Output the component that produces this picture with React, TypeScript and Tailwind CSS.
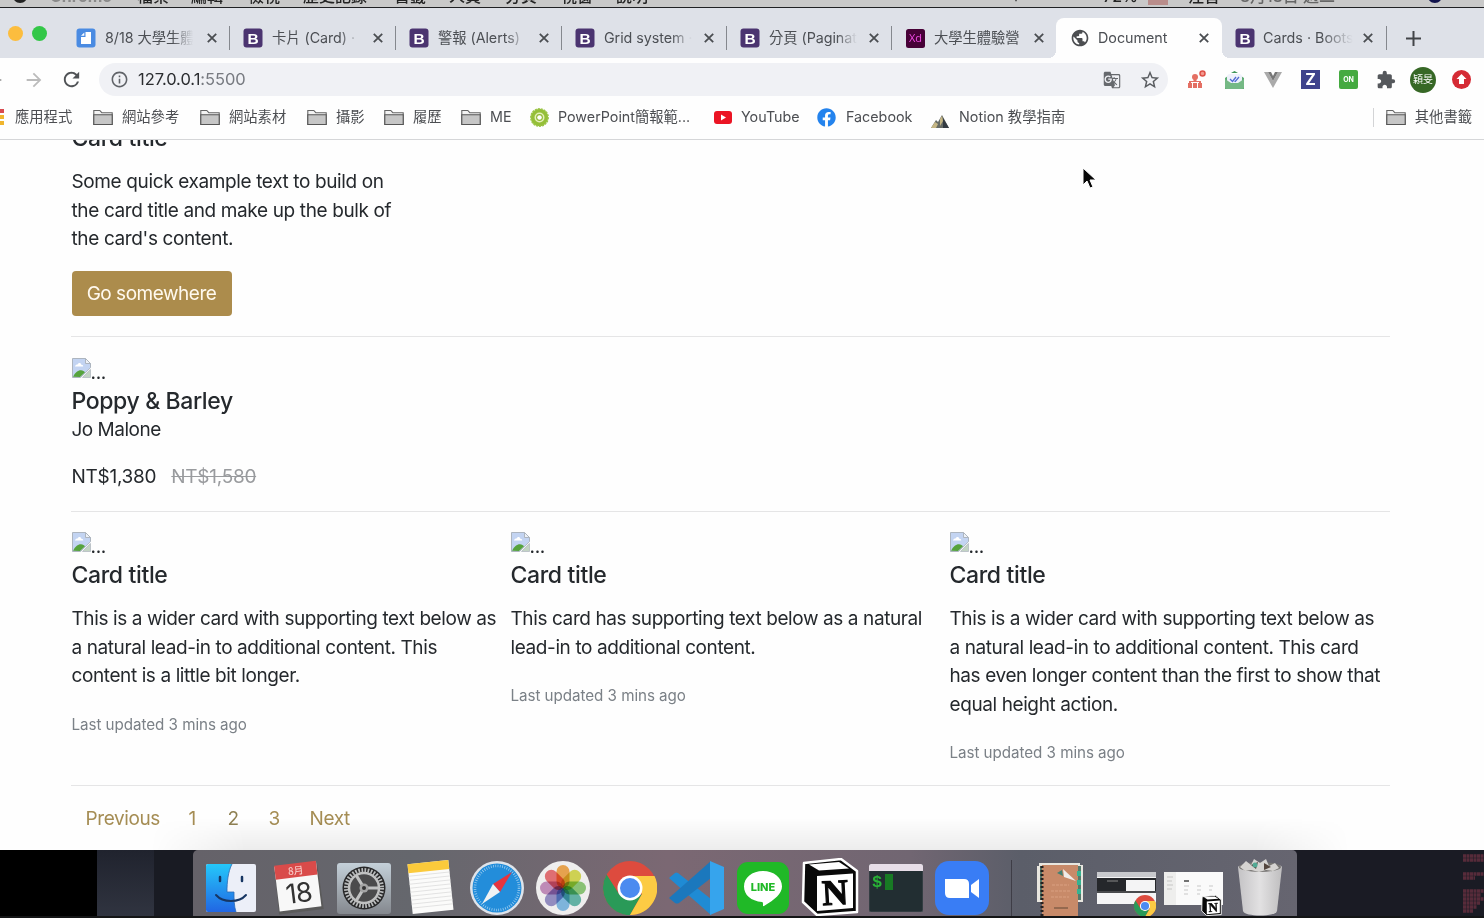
import React from "react";
import { FaFacebook } from "react-icons/fa";
import { MdExtension, MdStarBorder, MdGTranslate, MdRefresh, MdPublic, MdArrowForward, MdArrowBack, MdInfoOutline } from "react-icons/md";

function BootstrapIcon() {
  return (
    <svg width="20" height="20" viewBox="0 0 20 20" className="shrink-0">
      <rect x="0.5" y="0.5" width="19" height="19" rx="3" fill="#4b3470" />
      <text x="10" y="15.6" textAnchor="middle" fontSize="15.5" fontWeight="700" fill="#fff" fontFamily="Liberation Sans, sans-serif">B</text>
    </svg>
  );
}

function DocIcon() {
  return (
    <svg width="20" height="20" viewBox="0 0 20 20" className="shrink-0">
      <rect x="0.5" y="0.5" width="19" height="19" rx="3" fill="#4a8be2" />
      <path d="M9.5 4h5.5v12H5V9h4.5z" fill="#fff" />
      <path d="M8.3 4.6v3.2H5z" fill="#fff" />
    </svg>
  );
}

function XdIcon() {
  return (
    <svg width="19" height="19" viewBox="0 0 19 19" className="shrink-0">
      <rect width="19" height="19" rx="2.5" fill="#470137" />
      <text x="9.5" y="13" textAnchor="middle" fontSize="11" fontWeight="500" fill="#ef4be4" fontFamily="Open Sans, sans-serif">Xd</text>
    </svg>
  );
}

function CloseIcon() {
  return (
    <svg width="10" height="10" viewBox="0 0 10 10" className="shrink-0">
      <path d="M.8.8l8.4 8.4M9.2.8L.8 9.2" stroke="#4a4d51" strokeWidth="1.8" />
    </svg>
  );
}

type TabProps = { icon: React.ReactNode; label: string; width: string; fade?: boolean };

function Tab({ icon, label, width, fade }: TabProps) {
  return (
    <div className={`${width} flex h-9 shrink-0 items-center pl-[13px]`}>
      <div className="flex w-5 shrink-0 justify-center">{icon}</div>
      <div className={`ml-[9px] w-[90px] shrink-0 overflow-hidden whitespace-nowrap text-[14.3px] tracking-[-0.05px] text-[#4c4f54] ${fade ? "[mask-image:linear-gradient(to_right,black_75%,transparent_98%)]" : ""}`}>{label}</div>
      <div className="ml-auto mr-[12.5px]"><CloseIcon /></div>
    </div>
  );
}

function Divider() {
  return <div className="h-6 w-px shrink-0 bg-[#85888e]" />;
}

function Folder() {
  return (
    <svg width="20" height="17" viewBox="0 0 20 17" className="shrink-0">
      <path d="M.8 15.5V1.5h6l2 2.2h10.4v11.8z" fill="#f3f3f3" stroke="#666" strokeWidth="1.1" />
      <path d="M.8 5.8h18.4v9.7H.8z" fill="#c6c6c6" stroke="#555" strokeWidth="1.1" />
    </svg>
  );
}

function BrokenImage() {
  return (
    <div className="flex h-[29px] items-end">
      <svg width="19" height="20" viewBox="0 0 19 20" className="mb-[8px] shrink-0">
        <path d="M.5.5h13l5 5v4.2L8.6 19.5H.5z" fill="#c3d4f2" stroke="#adb5bf" />
        <path d="M3 8.5c0-1.8 2.6-1.7 2.9-2.5.7-1.7 3.4-1 3.3.8 1.4-.3 2 .6 2 1.7z" fill="#fff" />
        <path d="M1 18.8c2-4.2 5-6.7 8-6.6 2 0 3 1 4 2l-5 4.9z" fill="#56a33c" />
        <path d="M13.5.5v5h5z" fill="#eef2f8" stroke="#adb5bf" />
        <path d="M18.5 11.5v8h-8z" fill="#c3d4c4" stroke="#adb5bf" strokeWidth=".7" />
      </svg>
      <span className="h-[28px] text-[19px] leading-[29px] tracking-[-0.3px]">...</span>
    </div>
  );
}

function Card({ title, lines }: { title: string; lines: string[] }) {
  return (
    <div className="w-[439px] shrink-0">
      <BrokenImage />
      <h5 className="mt-px h-7 text-[23px] font-medium leading-7 tracking-[-0.35px]">{title}</h5>
      <div className="mt-[16px] whitespace-nowrap leading-[28.5px]">
        {lines.map((l) => <p key={l}>{l}</p>)}
      </div>
      <p className="mt-5 text-[15.2px] leading-[28.5px] tracking-[-0.05px] text-[#7b8187]">Last updated 3 mins ago</p>
    </div>
  );
}

function ChromeLogo({ className }: { className: string }) {
  return (
    <svg viewBox="0 0 54 54" className={className}>
      <circle cx="27" cy="27" r="27" fill="#dd4b3e" />
      <path d="M3.6 13.5A27 27 0 0 0 27 54L39 33 27 39 16 33z" fill="#2a9a58" />
      <path d="M27 54A27 27 0 0 0 51.5 15H27L39 33z" fill="#fccb44" />
      <circle cx="27" cy="27" r="12.5" fill="#fff" />
      <circle cx="27" cy="27" r="10" fill="#4b8bf0" />
    </svg>
  );
}

function NotionCube({ className }: { className: string }) {
  return (
    <svg viewBox="0 0 58 58" className={className}>
      <path d="M3 5L40 1 56 13V54L16 57 2 44z" fill="#090909" stroke="#fff" strokeWidth="2.5" strokeLinejoin="round" />
      <path d="M8 6.500L38 4 48 10.500 18 12.500z" fill="#fff" />
      <path d="M16 18L52 15.500V50L16 53z" fill="#fff" />
      <text x="34" y="46.500" textAnchor="middle" fontSize="36" fontWeight="700" fontFamily="Liberation Serif, serif" fill="#080808" stroke="#080808" strokeWidth="1.200" transform="rotate(-3 34 34)">N</text>
    </svg>
  );
}

function Finder() {
  return (
    <svg width="50" height="48" viewBox="0 0 50 48">
      <defs><linearGradient id="fb" x1="0" y1="0" x2="0" y2="1"><stop stopColor="#25c8fa" /><stop offset="1" stopColor="#2166e3" /></linearGradient></defs>
      <rect width="50" height="48" rx="2" fill="#eceff8" />
      <path d="M2 0h24c-4 8-5 18-5 28h7c0 7 0 14 2 20H2a2 2 0 0 1-2-2V2a2 2 0 0 1 2-2z" fill="url(#fb)" />
      <path d="M26 0c-4 8-5 18-5 28h7c0 7 0 14 2 20" fill="none" stroke="#2b6bb5" strokeWidth=".8" />
      <path d="M14 13v4M36 13v4" stroke="#173663" strokeWidth="2.500" strokeLinecap="round" />
      <path d="M10 31c7 8 23 8 30 0" fill="none" stroke="#173663" strokeWidth="2" strokeLinecap="round" />
    </svg>
  );
}

function Calendar() {
  return (
    <svg width="54" height="56" viewBox="0 0 54 56">
      <g transform="rotate(-7 27 28)">
        <path d="M6 7h43l1 45H5z" fill="#5a5a5a" /><rect x="6" y="4" width="42" height="45" fill="#f8f8f8" />
        <rect x="6" y="3" width="42" height="14" fill="#d94b4a" />
        <text x="27" y="14" fontSize="10" textAnchor="middle" fill="#fbd8d4" fontFamily="Noto Sans CJK TC, sans-serif">8月</text>
        <text x="27" y="42.500" fontSize="27" textAnchor="middle" fill="#333" fontFamily="Inter, sans-serif" letterSpacing="-1">18</text>
      </g>
    </svg>
  );
}

function Settings() {
  return (
    <svg width="54" height="51" viewBox="0 0 54 51">
      <defs><linearGradient id="sg" x1="0" y1="0" x2="0" y2="1"><stop stopColor="#c4d0d9" /><stop offset="1" stopColor="#84888e" /></linearGradient></defs>
      <rect width="54" height="51" rx="3" fill="url(#sg)" />
      <circle cx="27" cy="25" r="21.5" fill="#282829" />
      <circle cx="27" cy="25" r="18" fill="none" stroke="#b9bbbc" strokeWidth="4" strokeDasharray="1.700 1.440" />
      <circle cx="27" cy="25" r="15" fill="#4b4b4c" stroke="#c0c1c1" strokeWidth="2.500" />
      <path d="M27 25h15M27 25l-8-13M27 25l-8 13" stroke="#c0c1c1" strokeWidth="3.200" />
      <circle cx="27" cy="25" r="4.5" fill="#a4a4a4" /><circle cx="27" cy="25" r="2" fill="#333" />
    </svg>
  );
}

function Notes() {
  return (
    <svg width="50" height="56" viewBox="0 0 50 56">
      <g transform="rotate(-6 25 28)">
        <rect x="4" y="3" width="41" height="50" fill="#fbfbfa" /><rect x="4" y="3" width="41" height="9" fill="#fbca3b" />
        {[15, 19, 23, 27, 31, 35, 39, 43, 47].map((y) => <path key={y} d={`M4 ${y}h41`} stroke="#dededd" strokeWidth=".8" />)}
      </g>
    </svg>
  );
}

function Safari() {
  return (
    <svg width="54" height="54" viewBox="0 0 54 54">
      <circle cx="27" cy="27" r="27" fill="#dfe4ea" /><circle cx="27" cy="27" r="24.500" fill="#238dda" />
      <circle cx="27" cy="27" r="22" fill="none" stroke="#a7d2f1" strokeWidth="2.600" strokeDasharray=".7 1.604" />
      <path d="M42 11L30 31 23 23z" fill="#e7343e" /><path d="M12 43L23 23 30 31z" fill="#eff2f4" />
    </svg>
  );
}

const petals = ["#f5a33b", "#d7dc42", "#83c86b", "#54b5a5", "#75b8e8", "#8e87c6", "#c486bc", "#ec6368"];
function Photos() {
  return (
    <svg width="54" height="54" viewBox="0 0 54 54">
      <circle cx="27" cy="27" r="27" fill="#efeeee" />
      {petals.map((c, i) => <rect key={c} x="20.500" y="4" width="13" height="23" rx="6.500" fill={c} fillOpacity=".88" className="mix-blend-multiply" transform={`rotate(${i * 45} 27 27)`} />)}
    </svg>
  );
}

function VSCode() {
  return (
    <svg width="55" height="54" viewBox="0 0 55 54">
      <path d="M0 17l6-5q1-1 3 0l33 26v16z" fill="#1f8bd4" />
      <path d="M0 37l6 5q2 1 4 0l32-25V0z" fill="#1b78bd" />
      <path d="M41 0l14 6v42l-14 6z" fill="#36a4ed" />
    </svg>
  );
}

function Line() {
  return (
    <svg width="52" height="52" viewBox="0 0 52 52">
      <rect width="52" height="52" rx="11" fill="#20b927" />
      <path d="M26 9c11 0 19 6.5 19 15.5 0 7-7 13-18 19.5-2 1 0-4-2-4C14 39 7 33 7 24.500 7 15.500 15 9 26 9z" fill="#fff" />
      <text x="26" y="28.500" fontSize="11" fontWeight="800" textAnchor="middle" fill="#20b927" fontFamily="Inter, sans-serif">LINE</text>
    </svg>
  );
}

function Terminal() {
  return (
    <svg width="54" height="48" viewBox="0 0 54 48">
      <rect width="54" height="48" rx="2" fill="#222e32" stroke="#4f575c" strokeWidth=".8" /><path d="M0 7V2q0-2 2-2h50q2 0 2 2v5z" fill="#e8dee8" />
      <text x="3" y="23" fontSize="17" fontWeight="700" fill="#29b437" fontFamily="Liberation Mono, monospace">$</text><rect x="16" y="10" width="8" height="16" fill="#187a24" />
    </svg>
  );
}

function Zoom() {
  return (
    <svg width="54" height="54" viewBox="0 0 54 54">
      <rect width="54" height="54" rx="14" fill="#397df5" /><path d="M10 18h19q5 0 5 5v14H15q-5 0-5-5z" fill="#fff" />
      <path d="M36 24l8-6v19l-8-6z" fill="#fff" />
    </svg>
  );
}

function Notebook() {
  return (
    <svg width="48" height="54" viewBox="0 0 48 54">
      <path d="M3 0h41v2h3v37H1V3h2z" fill="#e8e6df" /><path d="M4 3h41v34H4z" fill="#55796c" />
      <rect x="6" y="2" width="36" height="52" fill="#c88a69" />
      <path d="M6 3v51" stroke="#25201f" strokeWidth="3" strokeDasharray="2 2" />
      <path d="M27 6l13 12-12-4z" fill="#f0ece9" /><path d="M21 10l5-3 1 6z" fill="#438073" />
      <path d="M16 22h17M15 28h19M15 34h18" stroke="#d39979" strokeWidth="1.500" strokeDasharray="3 1" /><path d="M18 45h14" stroke="#624837" />
      <path d="M43 8v5M43 17v5M43 26v5" stroke="#35b391" strokeWidth="4" />
    </svg>
  );
}

function ChromeWindow() {
  return (
    <svg width="59" height="32" viewBox="0 0 59 32">
      <rect width="59" height="32" fill="#f5f5f6" /><rect width="59" height="5" fill="#c8c9cd" /><rect y="6" width="59" height="13" fill="#25272b" />
      <rect x="29" y="8" width="29" height="11" fill="#f4f4f5" /><path d="M10 9h11" stroke="#888" /><path d="M0 20h59" stroke="#494a4d" strokeWidth="2" />
    </svg>
  );
}

function NotionWindow() {
  return (
    <svg width="59" height="33" viewBox="0 0 59 33">
      <rect width="59" height="33" fill="#fafafa" /><rect width="12" height="33" fill="#eeeeed" />
      <path d="M3 5h6M3 9h5M3 13h6M3 17h5M20 14h5M33 14h4M45 14h4M20 18h4M33 18h4M45 18h3M20 22h4M33 22h3" stroke="#bbb" strokeWidth=".8" /><path d="M20 9h5" stroke="#444" strokeWidth="1.500" />
    </svg>
  );
}

function Trash() {
  return (
    <svg width="46" height="58" viewBox="0 0 46 58">
      <defs><linearGradient id="tb"><stop stopColor="#c4c3c5" /><stop offset=".5" stopColor="#e2e1e2" /><stop offset="1" stopColor="#bfbebf" /></linearGradient></defs>
      <path d="M1 9c0-4 44-4 44 0l-5 44c-1 6-33 6-34 0z" fill="url(#tb)" />
      <ellipse cx="23" cy="9" rx="21" ry="5" fill="#777573" />
      <path d="M3 9l6-6 5 4 3-6 6 4 6-4 3 7 6-3 4 5-6 3-7-1-7 2-8-2-6 1z" fill="#d5d3d1" />
      <path d="M14 7l7-3-2 7zM27 5l7 4-7 3z" fill="#54463e" /><circle cx="18" cy="7" r="2.500" fill="#52a994" />
    </svg>
  );
}

function DockItem({ left, top, children }: { left: string; top: string; children: React.ReactNode }) {
  return <div className={`${left} ${top} shrink-0`}>{children}</div>;
}

export default function App() {
  return (
    <div className="flex h-[918px] w-[1484px] flex-col overflow-hidden bg-[#fefefe] font-['Inter','Noto_Sans_CJK_TC',sans-serif] text-[#25292d]">
      <div className="h-2 shrink-0 overflow-hidden border-b border-[#202124] bg-[#c9c9c9]">
        <div className="-mt-[14px] flex h-5 items-center whitespace-nowrap text-[16px] font-medium leading-5 text-[#232323]">
          <span className="ml-[11px] w-[39px] text-[20px]">●</span><span className="w-[87px] font-bold text-[#8a8a8a]">Chrome</span>
          <span className="w-[54px]">檔案</span><span className="w-[57px]">編輯</span><span className="w-[55px]">檢視</span><span className="w-[91px]">歷史記錄</span><span className="w-[55px]">書籤</span><span className="w-[56px]">人員</span><span className="w-[56px]">分頁</span><span className="w-[55px]">視窗</span><span>說明</span>
          <span className="ml-[364px]">▾</span><span className="ml-[83px] w-[45px]">72%</span><span className="h-[17px] w-[20px] bg-[#b98d8b]" /><span className="ml-5">注音</span><span className="ml-5 text-[#666]">8月18日 週二</span><span className="ml-auto mr-10 text-[20px] text-[#11134d]">●</span>
        </div>
      </div>
      <div className="flex h-[50px] shrink-0 items-end bg-[#dee1e8]">
        <div className="flex h-full w-[63px] shrink-0 items-center gap-[9px] pl-[8px]">
          <div className="h-[15px] w-[15px] rounded-full bg-[#fcbd3e]" /><div className="h-[15px] w-[15px] rounded-full bg-[#33c748]" />
        </div>
        <div className="flex h-10 items-center">
          <Tab icon={<DocIcon />} label="8/18 大學生體驗營" width="w-[166px]" fade />
          <Divider /><Tab icon={<BootstrapIcon />} label="卡片 (Card) · Bootstrap" width="w-[165px]" fade />
          <Divider /><Tab icon={<BootstrapIcon />} label="警報 (Alerts)" width="w-[165px]" fade />
          <Divider /><Tab icon={<BootstrapIcon />} label="Grid system · Boot" width="w-[164px]" fade />
          <Divider /><Tab icon={<BootstrapIcon />} label="分頁 (Pagination)" width="w-[164px]" fade />
          <Divider /><Tab icon={<XdIcon />} label="大學生體驗營" width="w-[164px]" />
        </div>
        <div className="relative flex h-10 w-[166px] shrink-0 items-center rounded-t-[8px] bg-[#fefefe] pl-[14px] before:absolute before:-left-2 before:bottom-0 before:h-2 before:w-2 before:bg-[radial-gradient(circle_at_0_0,transparent_8px,#fefefe_8px)] after:absolute after:-right-2 after:bottom-0 after:h-2 after:w-2 after:bg-[radial-gradient(circle_at_100%_0,transparent_8px,#fefefe_8px)]">
          <MdPublic size={20} color="#4b4d50" /><span className="ml-[8px] text-[14.3px] text-[#4c4f54]">Document</span><div className="ml-auto mr-[13px]"><CloseIcon /></div>
        </div>
        <div className="flex h-10 items-center">
          <div className="flex w-[164px] items-center pl-[13px]"><BootstrapIcon /><span className="ml-2 w-[90px] overflow-hidden whitespace-nowrap text-[14.3px] text-[#4c4f54] [mask-image:linear-gradient(to_right,black_65%,transparent)]">Cards · Bootstrap</span><div className="ml-auto mr-[13px]"><CloseIcon /></div></div>
          <Divider />
          <svg width="15" height="15" viewBox="0 0 15 15" className="ml-[19px]"><path d="M7.500 0v15M0 7.500h15" stroke="#424548" strokeWidth="2" /></svg>
        </div>
      </div>
      <div className="flex h-[43px] shrink-0 items-center">
        <MdArrowBack size={22} className="-ml-[17px] shrink-0 text-[#aaa]" /><MdArrowForward size={22} className="ml-[18px] shrink-0 text-[#bbb]" /><MdRefresh size={23} className="ml-[15px] shrink-0 text-[#505356]" />
        <div className="ml-4 flex h-[33px] w-[1069px] shrink-0 items-center rounded-full bg-[#f0f1f5] pl-[11px]">
          <MdInfoOutline size={19} color="#606368" /><span className="ml-[9px] text-[16.5px] tracking-[-0.05px] text-[#2b2d30]">127.0.0.1<span className="text-[#777a80]">:5500</span></span>
          <MdGTranslate size={18} color="#66696d" className="ml-auto" /><MdStarBorder size={22} color="#595c60" className="ml-[18px] mr-[7px]" />
        </div>
        <div className="ml-[19px] flex items-center">
          <svg width="19" height="20" viewBox="0 0 19 20"><g fill="#e46f63"><circle cx="8" cy="7" r="3" /><rect x="1" y="13" width="4" height="5" /><rect x="6" y="13" width="4" height="5" /><rect x="11" y="13" width="4" height="5" /><path d="M6.500 9h3v2H14v3h-2v-2H4v2H2v-3h4.500z" /></g><circle cx="15.500" cy="3.500" r="2.500" fill="#f3998f" stroke="#dd5148" strokeWidth="1.500" /></svg>
          <svg width="19" height="18" viewBox="0 0 19 18" className="ml-[19px]"><path d="M6 2l3.500-2L13 2z" fill="#3f9558" /><path d="M0 7l3-2v13H0zM19 7l-3-2v13h3z" fill="#5dab72" /><rect x="2" y="3" width="15" height="11" rx="3" fill="#eef1fb" /><path d="M0 8l6 4h7l6-4v8q0 2-2 2H2q-2 0-2-2z" fill="#75b985" /><path d="M5 8l2.500 2.500L11 6M9.500 10l.8.5L14 6" fill="none" stroke="#526bd2" strokeWidth="1.300" /></svg>
          <svg width="18" height="16" viewBox="0 0 18 16" className="ml-[20px]"><path d="M0 0h4l5 9 5-9h4L9 16z" fill="#aaa" /><path d="M4 0h3l2 4 2-4h3L9 9z" fill="#777" /></svg>
          <div className="ml-[19px] h-[19px] w-[19px] bg-[#3f438c] text-center text-[16px] font-bold leading-[19px] text-white">Z</div>
          <div className="ml-[19px] h-[19px] w-[19px] rounded-[2px] bg-[#45aa40] text-center text-[7px] font-bold leading-[19px] text-white">ON</div>
          <MdExtension size={20} color="#55585c" className="ml-[18px]" />
          <div className="ml-[14px] h-[26px] w-[26px] rounded-full bg-[#376826] text-center text-[10px] leading-[25px] text-white">穎旻</div>
          <svg width="19" height="19" viewBox="0 0 19 19" className="ml-[16px]"><circle cx="9.500" cy="9.500" r="9.500" fill="#d52b35" /><path d="M9.500 4l5 5H12v5H7V9H4.500z" fill="#fff" /></svg>
        </div>
      </div>
      <div className="flex h-[39px] shrink-0 items-center whitespace-nowrap border-b border-[#d5d6d8] pb-[6px] text-[14.3px] text-[#4c4e52]">
        <svg width="4" height="17" viewBox="0 0 4 17" className="shrink-0"><path d="M0 0h4v4H0z" fill="#d94b50" /><path d="M0 6h4v4H0zM0 12h4v4H0z" fill="#f0b52d" /></svg>
        <span className="ml-[11px] w-[78px] shrink-0">應用程式</span>
        <Folder /><span className="ml-[9px] w-[78px] shrink-0">網站參考</span>
        <Folder /><span className="ml-[9px] w-[78px] shrink-0">網站素材</span>
        <Folder /><span className="ml-[9px] w-[48px] shrink-0">攝影</span>
        <Folder /><span className="ml-[9px] w-[48px] shrink-0">履歷</span>
        <Folder /><span className="ml-[9px] w-[40px] shrink-0">ME</span>
        <svg width="19" height="19" viewBox="0 0 19 19" className="shrink-0"><circle cx="9.500" cy="9.500" r="8.700" fill="#95bf38" stroke="#9cc54a" strokeWidth="1.500" strokeDasharray="2 1" /><circle cx="9.500" cy="9.500" r="4.200" fill="#8db72e" stroke="#e5f0bc" strokeWidth="1.600" /><circle cx="9.500" cy="9.500" r="2.300" fill="#fff" /></svg>
        <span className="ml-[9px] w-[156px] shrink-0">PowerPoint簡報範...</span>
        <svg width="18" height="13" viewBox="0 0 18 13" className="shrink-0"><rect width="18" height="13" rx="3" fill="#eb1424" /><path d="M7 3.500v6l5-3z" fill="#fff" /></svg>
        <span className="ml-[9px] w-[76px] shrink-0">YouTube</span>
        <FaFacebook size={19} color="#2483ed" className="shrink-0" /><span className="ml-[10px] w-[85px] shrink-0">Facebook</span>
        <svg width="18" height="13" viewBox="0 0 18 13" className="mt-2 shrink-0"><path d="M0 13l5-8 2 2 4-7 7 13z" fill="#666b65" /><path d="M4 7l3 2-2 4H0zM9 4l2-3 1 5-3 5z" fill="#c5b684" /><path d="M12 3l6 10h-6z" fill="#343b42" /></svg>
        <span className="ml-[10px] tracking-[0.05px]">Notion 教學指南</span>
        <div className="ml-auto h-[19px] w-px bg-[#d3d4d6]" /><div className="ml-3"><Folder /></div><span className="ml-[9px] mr-[12px]">其他書籤</span>
      </div>
      <main className="relative h-[710px] shrink-0 overflow-hidden pl-[71.500px] text-[19px] tracking-[-0.4px]">
        <div className="-mt-[16px] h-7 text-[23px] font-medium leading-7 tracking-[-0.35px]">Card title</div>
        <div className="mt-[16px] leading-[28.500px] tracking-[-0.37px]"><p>Some quick example text to build on</p><p>the card title and make up the bulk of</p><p>the card's content.</p></div>
        <button className="mt-[17.500px] block h-[45px] w-[160px] rounded-[4px] bg-[#ac8c4c] pt-px leading-[44px] tracking-[-0.48px] text-[#fff9ee]">Go somewhere</button>
        <hr className="-ml-px mt-5 w-[1319px] border-[#e5e5e6]" />
        <div className="mt-[20px]">
          <BrokenImage />
          <h5 className="mt-px h-7 text-[23px] font-medium leading-7 tracking-[-0.37px]">Poppy &amp; Barley</h5>
          <p className="leading-[29px] tracking-[-0.5px]">Jo Malone</p>
          <p className="mt-[19px] leading-[28px] tracking-[-0.27px]">NT$1,380<span className="ml-[15px] text-[#999b9e] line-through">NT$1,580</span></p>
        </div>
        <hr className="-ml-px mt-5 w-[1319px] border-[#e5e5e6]" />
        <div className="mt-[19px] flex h-[254px]">
          <Card title="Card title" lines={["This is a wider card with supporting text below as", "a natural lead-in to additional content. This", "content is a little bit longer."]} />
          <Card title="Card title" lines={["This card has supporting text below as a natural", "lead-in to additional content."]} />
          <Card title="Card title" lines={["This is a wider card with supporting text below as", "a natural lead-in to additional content. This card", "has even longer content than the first to show that", "equal height action."]} />
        </div>
        <hr className="-ml-px w-[1319px] border-[#e5e5e6]" />
        <div className="mt-[19px] flex leading-[28px] text-[#a58d54]"><span className="ml-[14px] w-[103px]">Previous</span><span className="w-[39px]">1</span><span className="w-[41px] text-[#8f8052]">2</span><span className="w-[41px]">3</span><span>Next</span></div>
        <svg width="16" height="24" viewBox="0 0 16 24" className="absolute left-[1082px] top-[27px]"><path d="M1 1v17l4-4 3 7 3-1-3-7h6z" fill="#080808" stroke="#fff" /></svg>
        <div className="pointer-events-none absolute bottom-0 left-[150px] h-8 w-[1200px] bg-gradient-to-b from-transparent to-black/7 [mask-image:linear-gradient(to_right,transparent,black_8%,black_92%,transparent)]" />
      </main>
      <div className="flex h-[66px] shrink-0 bg-[#1a1b24]">
        <div className="w-[97px] shrink-0 bg-black" /><div className="w-[57px] shrink-0 bg-gradient-to-b from-[#20232e] to-[#303440]" /><div className="w-[39px] shrink-0 bg-[#191b23]" />
        <div className="flex w-[1104px] shrink-0 overflow-hidden rounded-t-[5px] bg-[linear-gradient(90deg,#656269,#65676d_20%,#7b6873_43%,#716672_65%,#5b5e69_75%,#666570)]">
          <DockItem left="ml-[13px]" top="mt-[14px]"><Finder /></DockItem>
          <DockItem left="ml-[15px]" top="mt-[10px]"><Calendar /></DockItem>
          <DockItem left="ml-[12px]" top="mt-[13px]"><Settings /></DockItem>
          <DockItem left="ml-[15px]" top="mt-[9px]"><Notes /></DockItem>
          <DockItem left="ml-[14px]" top="mt-[11px]"><Safari /></DockItem>
          <DockItem left="ml-[12px]" top="mt-[11px]"><Photos /></DockItem>
          <DockItem left="ml-[13px]" top="mt-[11px]"><ChromeLogo className="h-[54px] w-[54px]" /></DockItem>
          <DockItem left="ml-[12px]" top="mt-[11px]"><VSCode /></DockItem>
          <DockItem left="ml-[13px]" top="mt-[12px]"><Line /></DockItem>
          <DockItem left="ml-[12px]" top="mt-[8px]"><NotionCube className="h-[58px] w-[58px]" /></DockItem>
          <DockItem left="ml-[10px]" top="mt-[14px]"><Terminal /></DockItem>
          <DockItem left="ml-[12px]" top="mt-[11px]"><Zoom /></DockItem>
          <div className="ml-[22px] mt-[10px] h-14 w-px shrink-0 bg-[#3e3d46]" />
          <DockItem left="ml-[24px]" top="mt-[13px]"><Notebook /></DockItem>
          <div className="relative ml-[13px] mt-[22px] h-11 w-[59px] shrink-0"><ChromeWindow /><ChromeLogo className="absolute -bottom-[1px] left-[37px] h-[22px] w-[22px]" /></div>
          <div className="relative ml-[8px] mt-[22px] h-11 w-[59px] shrink-0"><NotionWindow /><NotionCube className="absolute bottom-0 left-[37px] h-[21px] w-[21px]" /></div>
          <DockItem left="ml-[14px]" top="mt-[8px]"><Trash /></DockItem>
        </div>
        <div className="flex flex-1 justify-end"><svg width="21" height="66" viewBox="0 0 21 66"><path d="M0 6h22M0 10h22M0 24h22M0 28h12M0 41h22M0 45h18M0 49h22M0 53h17M0 57h14M0 61h10" stroke="#783446" strokeWidth="3.500" strokeDasharray="3 .5" opacity=".65" /></svg></div>
      </div>
      <div className="h-0.5 shrink-0 bg-[#141516]" />
    </div>
  );
}
